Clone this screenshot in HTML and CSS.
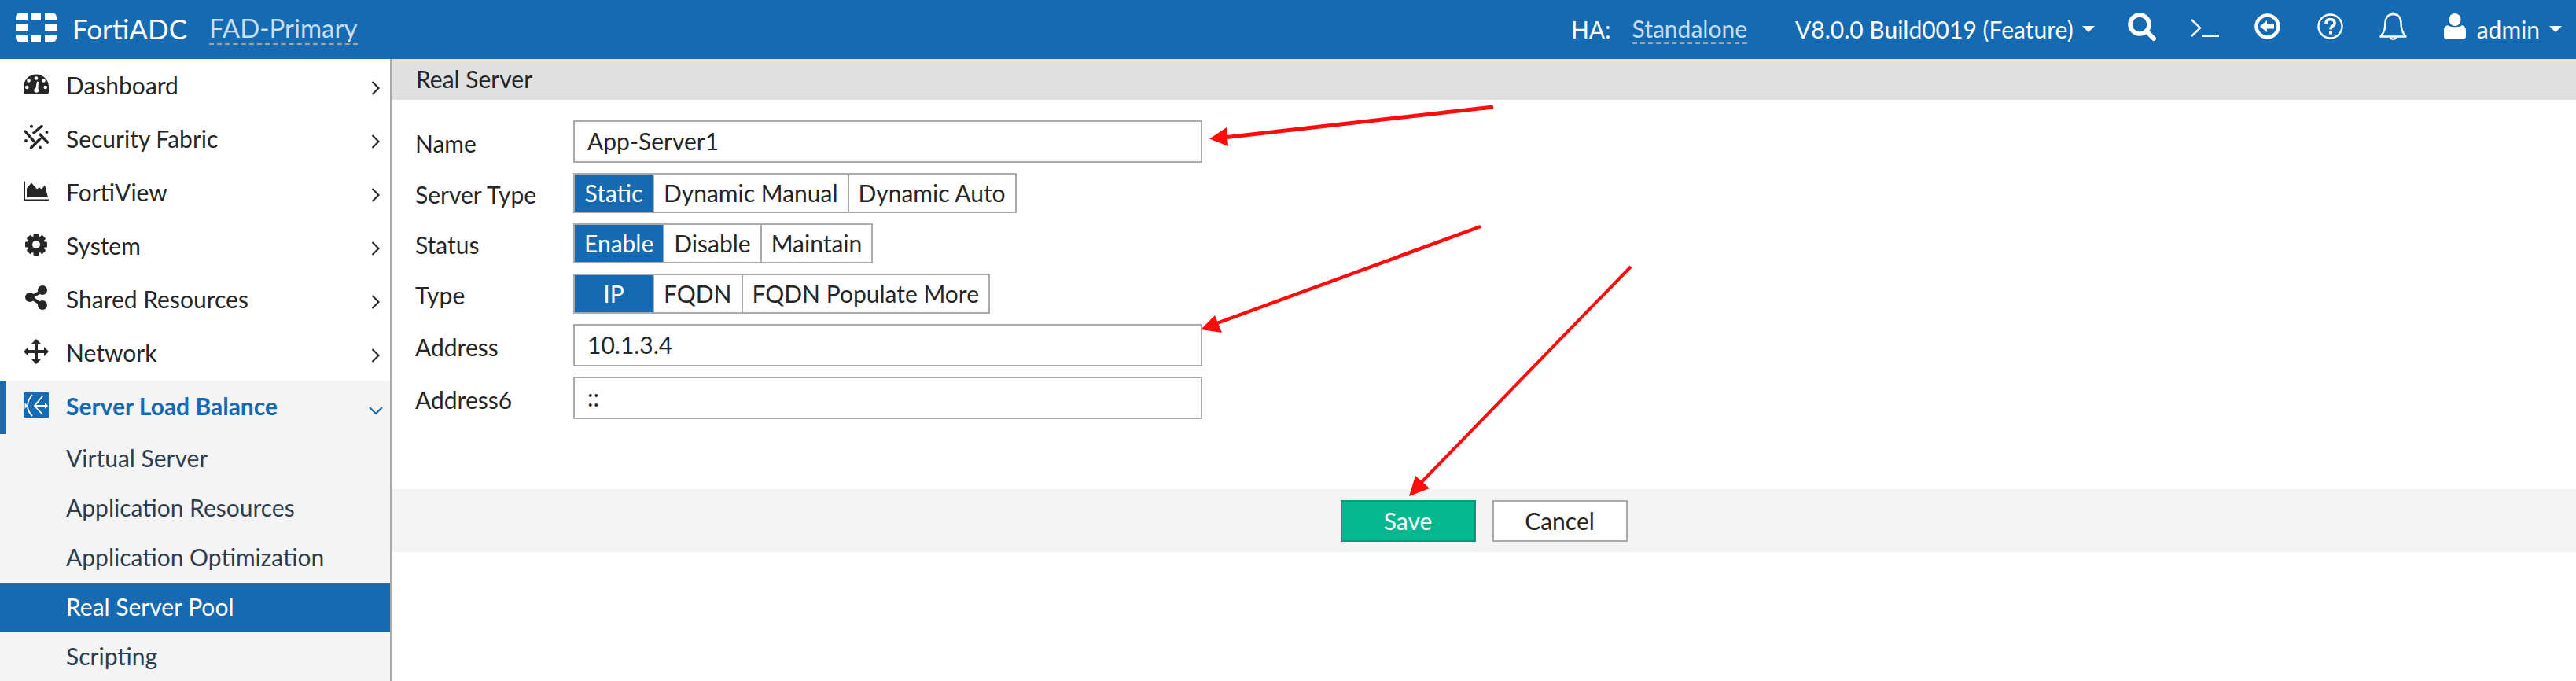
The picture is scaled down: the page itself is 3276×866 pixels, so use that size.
FILE: index.html
```html
<!DOCTYPE html>
<html lang="en">
<head>
<meta charset="utf-8">
<title>FortiADC</title>
<link rel="stylesheet" href="styles.css">
</head>
<body>
<div class="app">
  <header class="topbar">
    <svg class="logo" viewBox="0 0 52 38"><path d="M0 10V7Q0 0 7 0H15V10ZM19 0H32V10H19ZM37 0H45Q52 0 52 7V10H37ZM0 14H15V24H0ZM37 14H52V24H37ZM0 29H15V38H7Q0 38 0 31ZM19 29H32V38H19ZM37 29H52V31Q52 38 45 38H37Z"/></svg>
    <span class="brand">FortiADC</span>
    <span class="host dashed">FAD-Primary</span>
    <div class="top-right">
      <span class="ha">HA:</span>
      <span class="standalone dashed">Standalone</span>
      <span class="version">V8.0.0 Build0019 (Feature)</span>
      <span class="caret caret-v"></span>
      <svg class="ti ti-search" viewBox="0 0 36 36"><circle cx="15" cy="15" r="12" fill="none" stroke="#fff" stroke-width="5.5"/><path d="M24 24L33 33" stroke="#fff" stroke-width="6" stroke-linecap="round"/></svg>
      <svg class="ti ti-term" viewBox="0 0 36 23"><path d="M1 1L12 11.500L1 22" fill="none" stroke="#fff" stroke-width="2.500"/><path d="M14 21.500H36" stroke="#fff" stroke-width="3"/></svg>
      <svg class="ti ti-back" viewBox="0 0 33 33"><circle cx="16.500" cy="16.500" r="14" fill="none" stroke="#fff" stroke-width="4.500"/><path d="M7 16.500L16 9V13.500H25V19.500H16V24Z" fill="#fff"/></svg>
      <svg class="ti ti-help" viewBox="0 0 33 33"><circle cx="16.500" cy="16.500" r="15" fill="none" stroke="#fff" stroke-width="2.500"/><path d="M11 13Q11 7.500 16.500 7.500Q22 7.500 22 12.500Q22 15 19 16.500Q17 17.500 17 20.500" fill="none" stroke="#fff" stroke-width="3.500"/><rect x="15" y="22.500" width="4" height="4" fill="#fff"/></svg>
      <svg class="ti ti-bell" viewBox="0 0 35 38"><path d="M17.500 3C10 3 7.500 9 7.500 14C7.500 22 6 26 1.500 31.500H33.500C29 26 27.500 22 27.500 14C27.500 9 25 3 17.500 3ZM17.500 3V0.500" fill="none" stroke="#fff" stroke-width="2.500" stroke-linejoin="round"/><path d="M14 32.500A3.800 3.800 0 0 0 21 32.500" fill="none" stroke="#fff" stroke-width="2"/></svg>
      <svg class="ti ti-user" viewBox="0 0 28 33"><ellipse cx="14" cy="8" rx="7.500" ry="8" fill="#fff"/><path d="M5 15C7 18 21 18 23 15C26 16 28 18 28 22V29Q28 33 24 33H4Q0 33 0 29V22C0 18 2 16 5 15Z" fill="#fff"/></svg>
      <span class="admin">admin</span>
      <span class="caret caret-a"></span>
    </div>
  </header>
  <div class="body">
    <nav class="sidebar">
      <a class="nav"><svg class="ni" viewBox="0 0 32 25"><path d="M2 25Q0 25 0 22V16A16 16 0 0 1 32 16V22Q32 25 30 25Z" fill="#262626"/><g fill="#fff"><circle cx="16" cy="5" r="2.300"/><circle cx="6.500" cy="8" r="2.300"/><circle cx="25.500" cy="8" r="2.300"/><circle cx="4.300" cy="16.500" r="2.300"/><circle cx="27.700" cy="16.500" r="2.300"/><path d="M17 9L19 9.500L18.500 18Q20 20 19 22Q17.500 24 15 23Q12.500 21.500 13.500 19Q14.500 17.500 15.500 17Z"/></g></svg><span>Dashboard</span><svg class="chev" viewBox="0 0 11 18"><path d="M1.500 1L9.500 9L1.500 17" fill="none" stroke="#262626" stroke-width="2.200"/></svg></a>
      <a class="nav"><svg class="ni" viewBox="0 0 32 32"><g stroke="#262626" stroke-width="3.400" stroke-linecap="round" fill="none"><path d="M13 10L23 1.500M2 8L13 20.500M9.500 29L21 17.500M21 12L30.500 22"/></g><g fill="#262626"><circle cx="10" cy="1.800" r="2"/><circle cx="29.500" cy="9" r="2"/><circle cx="3" cy="20" r="2"/><circle cx="21" cy="28.500" r="2"/></g></svg><span>Security Fabric</span><svg class="chev" viewBox="0 0 11 18"><path d="M1.500 1L9.500 9L1.500 17" fill="none" stroke="#262626" stroke-width="2.200"/></svg></a>
      <a class="nav"><svg class="ni" viewBox="0 0 32 25"><path d="M1 0V24H32" fill="none" stroke="#262626" stroke-width="2"/><path d="M4 20.500V9L10 2L17 10L20 8L23 10L27 5L31 20.500Z" fill="#262626"/></svg><span>FortiView</span><svg class="chev" viewBox="0 0 11 18"><path d="M1.500 1L9.500 9L1.500 17" fill="none" stroke="#262626" stroke-width="2.200"/></svg></a>
      <a class="nav"><svg class="ni" viewBox="-16 -16 32 32"><g fill="#262626"><circle r="11"/><rect x="-3.500" y="-14" width="7" height="28" rx="1"/><rect x="-3.500" y="-14" width="7" height="28" rx="1" transform="rotate(45)"/><rect x="-3.500" y="-14" width="7" height="28" rx="1" transform="rotate(90)"/><rect x="-3.500" y="-14" width="7" height="28" rx="1" transform="rotate(135)"/></g><circle r="5" fill="#fff"/></svg><span>System</span><svg class="chev" viewBox="0 0 11 18"><path d="M1.500 1L9.500 9L1.500 17" fill="none" stroke="#262626" stroke-width="2.200"/></svg></a>
      <a class="nav"><svg class="ni" viewBox="0 0 32 32"><path d="M9 15L24 7M9 15L24 25" stroke="#262626" stroke-width="4"/><circle cx="8" cy="15" r="6" fill="#262626"/><circle cx="24" cy="6" r="6" fill="#262626"/><circle cx="24" cy="25" r="6" fill="#262626"/></svg><span>Shared Resources</span><svg class="chev" viewBox="0 0 11 18"><path d="M1.500 1L9.500 9L1.500 17" fill="none" stroke="#262626" stroke-width="2.200"/></svg></a>
      <a class="nav"><svg class="ni" viewBox="0 0 32 32"><path d="M16 0L22 6H18V14H26V10L32 16L26 22V18H18V26H22L16 32L10 26H14V18H6V22L0 16L6 10V14H14V6H10Z" fill="#262626"/></svg><span>Network</span><svg class="chev" viewBox="0 0 11 18"><path d="M1.500 1L9.500 9L1.500 17" fill="none" stroke="#262626" stroke-width="2.200"/></svg></a>
      <a class="nav nav-open"><svg class="ni" viewBox="0 0 32 32"><rect width="32" height="32" rx="1" fill="#166ab2"/><path d="M14 17H28M24 5L14 17L24 28M11 3Q5 10 5 17Q5 24 11 30" fill="none" stroke="#fff" stroke-width="1.800"/><path d="M27 13V21L31 17ZM1.500 13V21L5 17Z" fill="#fff"/></svg><span>Server Load Balance</span><svg class="chev-down" viewBox="0 0 18 10"><path d="M1 1L9 9L17 1" fill="none" stroke="#166ab2" stroke-width="2.200"/></svg></a>
      <a class="sub">Virtual Server</a>
      <a class="sub">Application Resources</a>
      <a class="sub">Application Optimization</a>
      <a class="sub sub-active">Real Server Pool</a>
      <a class="sub">Scripting</a>
    </nav>
    <main class="content">
      <div class="title">Real Server</div>
      <div class="form">
        <div class="row row-input"><span class="label">Name</span><div class="input">App-Server1</div></div>
        <div class="row"><span class="label">Server Type</span><div class="seg"><span class="opt on">Static</span><span class="opt">Dynamic Manual</span><span class="opt">Dynamic Auto</span></div></div>
        <div class="row"><span class="label">Status</span><div class="seg"><span class="opt on">Enable</span><span class="opt">Disable</span><span class="opt">Maintain</span></div></div>
        <div class="row"><span class="label">Type</span><div class="seg"><span class="opt on">IP</span><span class="opt">FQDN</span><span class="opt">FQDN Populate More</span></div></div>
        <div class="row row-input"><span class="label">Address</span><div class="input">10.1.3.4</div></div>
        <div class="row row-input"><span class="label">Address6</span><div class="input">::</div></div>
      </div>
      <div class="actions">
        <button class="btn btn-save">Save</button>
        <button class="btn">Cancel</button>
      </div>
    </main>
  </div>
  <svg class="arrows" viewBox="0 0 3276 866">
    <g stroke="#fe0b0b" fill="#fe0b0b">
      <path d="M1899 136L1556 175" stroke-width="5" fill="none"/>
      <path d="M1538 176.500L1560 162L1562 186Z" stroke="none"/>
      <path d="M1883 288L1545 412" stroke-width="4.500" fill="none"/>
      <path d="M1527 419L1545 401L1554 423Z" stroke="none"/>
      <path d="M2074 339L1807 614" stroke-width="4" fill="none"/>
      <path d="M1792 631L1800 605L1818 621Z" stroke="none"/>
    </g>
  </svg>
</div>
</body>
</html>
```
FILE: styles.css
```css
* { box-sizing: border-box; }
html, body { margin: 0; padding: 0; }
body { font-family: Lato, "Open Sans", sans-serif; font-size: 30px; color: #262626; background: #fff; }
.app { position: relative; width: 3276px; height: 866px; overflow: hidden; }

.topbar { display: flex; align-items: center; height: 75px; background: #166ab2; color: #fff; padding-left: 20px; }
.logo { width: 52px; height: 38px; fill: #fff; margin-top: -5px; }
.brand { font-size: 35px; margin-left: 20px; margin-top: -3px; }
.host { font-size: 33px; margin-left: 28px; color: #c9ddf0; margin-top: -2px; }
.dashed { border-bottom: 2px dashed #a9a296; line-height: 1.2; }
.top-right { display: flex; align-items: center; margin-left: auto; padding-right: 18px; font-size: 30px; }
.ha { margin-right: 27px; margin-top: -2px; }
.standalone { color: #c9ddf0; margin-right: 61px; margin-top: -2px; }
.version { margin-top: -2px; }
.caret { width: 0; height: 0; border-left: 8px solid transparent; border-right: 8px solid transparent; border-top: 8px solid #fff; }
.caret-v { margin-left: 11px; margin-top: -2px; }
.caret-a { margin-left: 12px; margin-top: -2px; }
.ti { display: block; flex: none; }
.ti-search { width: 36px; height: 36px; margin-left: 42px; margin-top: -8px; }
.ti-term { width: 36px; height: 23px; margin-left: 44px; margin-top: -5px; }
.ti-back { width: 33px; height: 33px; margin-left: 45px; margin-top: -8px; }
.ti-help { width: 33px; height: 33px; margin-left: 47px; margin-top: -8px; }
.ti-bell { width: 35px; height: 38px; margin-left: 46px; margin-top: -8px; }
.ti-user { width: 28px; height: 33px; margin-left: 47px; margin-top: -8px; }
.admin { margin-left: 14px; margin-top: -2px; }

.body { display: flex; height: 791px; }
.sidebar { flex: none; width: 498px; border-right: 2px solid #aaa; padding-top: 1px; background: #fff; }
.nav { display: flex; align-items: center; height: 68px; padding-left: 30px; padding-right: 13px; }
.nav span { flex: 1; margin-left: 22px; padding-bottom: 4px; }
.ni { width: 32px; height: 32px; flex: none; margin-top: -6px; }
.chev { width: 11px; height: 18px; flex: none; margin-top: 4px; }
.chev-down { width: 18px; height: 10px; flex: none; margin-top: 8px; margin-right: -4px; }
.nav-open { background: #f4f4f4; color: #166ab2; font-weight: 700; border-left: 7px solid #166ab2; padding-left: 23px; }
.sub { display: flex; align-items: center; height: 63px; padding-left: 84px; padding-bottom: 3px; background: #f4f4f4; color: #2c3e50; }
.sub-active { background: #166ab2; color: #fff; }

.content { flex: 1; min-width: 0; display: flex; flex-direction: column; }
.title { height: 52px; background: #e0e0e0; padding-left: 31px; line-height: 50px; flex: none; }
.form { display: flex; flex-direction: column; gap: 13px; padding: 26px 0 0 30px; height: 495px; flex: none; }
.row { display: flex; align-items: center; height: 51px; }
.row-input { height: 54px; }
.label { width: 201px; flex: none; padding-top: 3px; }
.input { width: 800px; height: 100%; border: 2px solid #aaa; padding-left: 16px; padding-bottom: 2px; display: flex; align-items: center; }
.seg { display: flex; height: 100%; border: 2px solid #aaa; }
.opt { display: flex; align-items: center; justify-content: center; padding: 0 12px 2px; border-left: 2px solid #aaa; }
.opt.on { background: #166ab2; color: #fff; min-width: 99px; border-left: 0; }
.actions { display: flex; justify-content: center; align-items: center; gap: 21px; height: 80px; background: #f4f4f4; flex: none; }
.btn { width: 172px; height: 53px; border: 2px solid #aaa; background: #fff; color: #262626; font: inherit; padding: 0; }
.btn-save { background: #06b78f; border-color: #0a9a7a; color: #fff; }

.arrows { position: absolute; left: 0; top: 0; width: 3276px; height: 866px; pointer-events: none; }
```
